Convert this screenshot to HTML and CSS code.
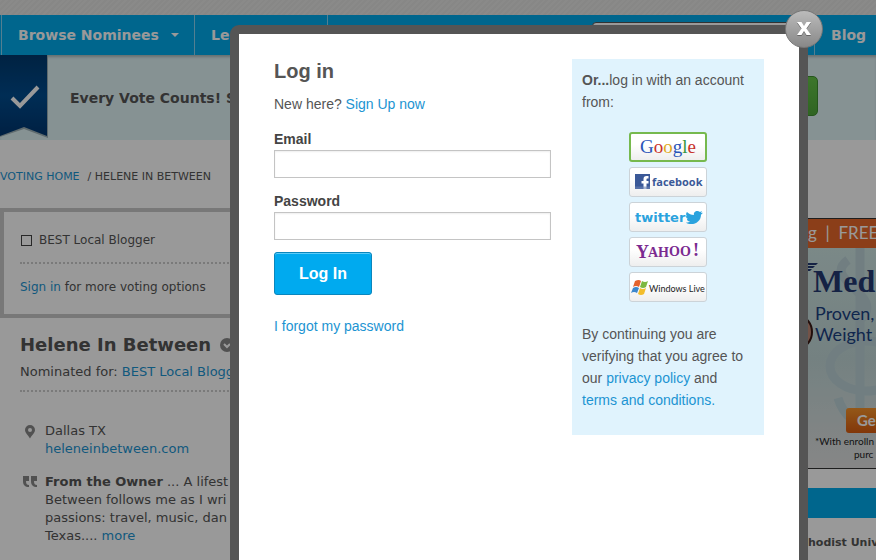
FILE: index.html
```html
<!DOCTYPE html>
<html lang="en">
<head>
  <meta charset="UTF-8">
  <meta name="viewport" content="width=device-width, initial-scale=1.0">
  <title>Helene In Between</title>
  <link rel="stylesheet" href="styles.css">
</head>
<body>

<div class="page">
  <div class="top-strip"></div>
  <nav class="nav">
    <a class="nav-item nav-browse" href="#">Browse Nominees <span class="caret"></span></a>
    <a class="nav-item nav-learn" href="#">Le</a>
    <input class="nav-search" type="search" aria-label="Search">
    <a class="nav-item nav-blog" href="#">Blog</a>
  </nav>

  <div class="banner">
    <svg class="ribbon" width="48" height="84" viewBox="0 0 48 84">
      <defs>
        <linearGradient id="ribbonFill" x1="0" y1="0" x2="0" y2="1">
          <stop offset="0" stop-color="#00396e"/>
          <stop offset="0.5" stop-color="#004c8e"/>
          <stop offset="1" stop-color="#003670"/>
        </linearGradient>
      </defs>
      <path d="M0 82L24 74L48 83V0H0z" fill="#9fb3b8"/>
      <path d="M0 81L24 72L47 81V0H0z" fill="url(#ribbonFill)"/>
      <path d="M12 43L20 51L38 32" fill="none" stroke="#fff" stroke-width="4"/>
    </svg>
    <strong class="banner-text">Every Vote Counts! S</strong>
    <button class="vote-btn" type="button" aria-label="Vote"></button>
  </div>

  <div class="breadcrumb"><a href="#">Voting Home</a><span>/ Helene In Between</span></div>

  <div class="main">
    <div class="content">
      <div class="vote-box">
        <label class="vote-row"><input type="checkbox"> BEST Local Blogger</label>
        <p class="vote-signin"><a href="#">Sign in</a> for more voting options</p>
      </div>

      <div class="profile">
        <h1>Helene In Between
          <svg width="14" height="14" viewBox="0 0 14 14"><circle cx="7" cy="7" r="7" fill="#888"/><path d="M4 6l3 3 3-3" fill="none" stroke="#fff" stroke-width="2"/></svg>
        </h1>
        <p class="nominated">Nominated for: <a href="#">BEST Local Blogger</a></p>
        <div class="detail">
          <svg width="10" height="14" viewBox="0 0 10 14"><path d="M5 0a5 5 0 0 1 5 5c0 3-3 5-5 8.500C3 10 0 8 0 5a5 5 0 0 1 5-5zM5 3a2 2 0 1 0 0 4a2 2 0 0 0 0-4z" fill="#888" fill-rule="evenodd"/></svg>
          <p>Dallas TX<br><a href="#">heleneinbetween.com</a></p>
        </div>
        <div class="detail">
          <svg width="14" height="12" viewBox="0 0 14 12"><path d="M0 0h6v5H3c0 3 1 4 3 4v2c-4 0-6-2-6-6zM8 0h6v5h-3c0 3 1 4 3 4v2c-4 0-6-2-6-6z" fill="#888"/></svg>
          <p><strong>From the Owner</strong> ... A lifest<br>Between follows me as I wri<br>passions: travel, music, dan<br>Texas.... <a href="#">more</a></p>
        </div>
      </div>
    </div>

    <div class="sidebar">
      <div class="ad">
        <div class="ad-top">g&nbsp; |&nbsp; FREE</div>
        <div class="ad-body">
          <svg class="ad-art" width="68" height="219" viewBox="0 0 68 219">
            <g fill="none" stroke="#bcd3d8" stroke-width="9">
              <ellipse cx="58" cy="118" rx="36" ry="25"/>
              <path d="M52 0v180M40 12c-28 20 40 35 12 60M30 150c6 20 20 28 38 30"/>
            </g>
            <path d="M0 15h10l-2 2H0zM0 18h7l-2 2H0zM0 21h4l-2 2H0z" fill="#243a72"/>
            <ellipse cx="-8" cy="84" rx="12" ry="15" fill="#c08b78" stroke="#3a1a14" stroke-width="2"/>
          </svg>
          <div class="ad-logo">Med</div>
          <div class="ad-copy">Proven,<br>Weight</div>
          <button class="ad-btn" type="button">Ge</button>
          <div class="ad-note">*With enrolln<span>purc</span></div>
        </div>
      </div>
      <div class="side-bar-title"></div>
      <strong class="side-text">hodist Univ</strong>
    </div>
  </div>
</div>

<div class="overlay"></div>

<div class="modal" role="dialog" aria-labelledby="loginTitle">
  <button class="close" type="button" aria-label="Close">
    <svg width="16" height="16" viewBox="0 0 16 16"><path d="M1 2h4.500L8 6l2.500-4H15l-4.600 6.500L15 15h-4.500L8 11l-2.500 4H1l4.600-6.500z" fill="#666"/><path d="M1 1h4.500L8 5l2.500-4H15l-4.600 6.500L15 14h-4.500L8 10l-2.500 4H1l4.600-6.500z" fill="#fff"/></svg>
  </button>
  <form class="login">
    <h2 id="loginTitle">Log in</h2>
    <p class="new-here">New here? <a href="#">Sign Up now</a></p>
    <div class="form-group">
      <label for="email">Email</label>
      <input type="text" id="email" name="email">
    </div>
    <div class="form-group">
      <label for="password">Password</label>
      <input type="password" id="password" name="password">
    </div>
    <button class="login-btn" type="submit">Log In</button>
    <p><a href="#">I forgot my password</a></p>
  </form>

  <div class="social">
    <p><strong>Or...</strong>log in with an account from:</p>
    <div class="social-list">
      <button class="social-btn google" type="button">
        <svg width="74" height="26" viewBox="0 0 74 26"><text class="google-text" x="9" y="19"><tspan fill="#2a55b8">G</tspan><tspan fill="#c8322b">o</tspan><tspan fill="#e0a81c">o</tspan><tspan fill="#2a55b8">g</tspan><tspan fill="#37963f">l</tspan><tspan fill="#c8322b">e</tspan></text></svg>
      </button>
      <button class="social-btn" type="button">
        <svg width="76" height="28" viewBox="0 0 76 28">
          <rect x="5" y="6" width="15" height="15" fill="#3b5998"/>
          <path d="M18.500 8h-2c-2 0-3 1-3 3v2h-2v2.500h2V21h3v-5.500h2V13h-2v-1.500c0-.7.300-1 1-1h1z" fill="#fff"/>
          <path d="M5 18.500h15V21H5z" fill="#6d84b4" opacity=".6"/>
          <text class="facebook-text" x="22" y="18">facebook</text>
        </svg>
      </button>
      <button class="social-btn" type="button">
        <svg width="76" height="28" viewBox="0 0 76 28">
          <text class="twitter-text" x="5" y="19">twitter</text>
          <path d="M57 9c2 2 4 3 7 3c-1-3 3-5.500 6-3l2-1l-1 2l2-.3l-2 2c0 6-5 9.500-10 9.300c-2 0-4-.5-5-1.500c2 0 3-.4 4-1c-2-.3-3-1-3-2.500h1c-1.500-.6-2-1.500-2-3l1 .3c-1-1-1.300-3 0-4.300z" fill="#2ba3de"/>
        </svg>
      </button>
      <button class="social-btn" type="button">
        <svg width="76" height="28" viewBox="0 0 76 28"><text class="yahoo-text" y="20"><tspan class="yahoo-big" x="6">Y</tspan><tspan x="18" y="19">A</tspan><tspan x="28">H</tspan><tspan x="39" y="18">O</tspan><tspan x="50">O</tspan><tspan class="yahoo-big" x="63" y="18">!</tspan></text></svg>
      </button>
      <button class="social-btn" type="button">
        <svg width="76" height="28" viewBox="0 0 76 28">
          <path d="M5 8q4-2 6 0l-2 6q-3-2-6 0z" fill="#e5632d"/>
          <path d="M12 8q3 2 6 0l-2 6q-3 2-6 0z" fill="#7db840"/>
          <path d="M3 15q3-2 6 0l-2 5q-3-2-6 0z" fill="#3d87cc"/>
          <path d="M10 15q3 2 6 0l-2 6q-3 2-6 0z" fill="#f3bd2c"/>
          <text class="windows-text" x="19" y="19">Windows Live</text>
        </svg>
      </button>
    </div>
    <p>By continuing you are verifying that you agree to our <a href="#">privacy policy</a> and <a href="#">terms and conditions.</a></p>
  </div>
</div>

</body>
</html>
```

FILE: styles.css
```css
* {
  box-sizing: border-box;
}
body {
  margin: 0;
  font-family: Verdana, "DejaVu Sans", sans-serif;
  font-size: 13px;
  line-height: 18px;
  color: #555;
  background-color: #fff;
}
html, body {
  height: 100%;
  overflow: hidden;
}
a {
  color: #1c94d2;
  text-decoration: none;
}
p, h1, h2 {
  margin: 0;
}
svg {
  display: block;
}
.page {
  white-space: nowrap;
}

/* Header */
.top-strip {
  height: 15px;
  background: repeating-linear-gradient(135deg, #e6e6e4 0, #e6e6e4 2px, #e2e2e0 2px, #e2e2e0 4px);
}
.nav {
  display: flex;
  height: 40px;
  padding-left: 1px;
  background-color: #00aaec;
}
.nav-item {
  padding: 0 17px;
  border-left: 1px solid #8ad4f2;
  color: #fff;
  font-size: 14px;
  font-weight: bold;
  line-height: 40px;
}
.nav-browse {
  display: flex;
  align-items: center;
  gap: 12px;
  width: 193px;
  padding: 0 16px;
}
.nav-learn {
  width: 134px;
  padding: 0 16px;
  border-right: 1px solid #8ad4f2;
}
.caret {
  border: 4px solid transparent;
  border-top-color: #fff;
  border-bottom: 0;
}
.nav-search {
  width: 198px;
  height: 26px;
  margin: 7px 24px 0 auto;
  border: 1px solid #555;
  border-radius: 4px;
}
.nav-blog {
  width: 62px;
  padding: 0 16px;
}
.banner {
  display: flex;
  height: 85px;
  background-color: #e0f3f6;
  box-shadow: inset 0 3px 3px -1px #a9b9bc;
}
.banner-text {
  margin-left: 22px;
  font-size: 14px;
  line-height: 86px;
}
.vote-btn {
  width: 120px;
  height: 40px;
  margin: 21px 58px 0 auto;
  border: 1px solid #3f8f2f;
  border-radius: 5px;
  background: linear-gradient(#66c548, #50a83a);
}
.breadcrumb {
  display: flex;
  gap: 8px;
  height: 68px;
  padding-top: 28px;
  font-size: 11px;
  text-transform: uppercase;
}

/* Nominee */
.main {
  display: flex;
}
.content {
  flex: 1;
  min-width: 0;
}
.vote-box {
  height: 110px;
  padding: 15px 16px;
  border: 4px solid #c8c8c8;
  font-size: 12px;
}
.vote-row {
  display: flex;
  align-items: center;
  gap: 7px;
  height: 37px;
  padding: 0 1px 9px;
  border-bottom: 2px dotted #ccc;
}
.vote-row input {
  appearance: none;
  width: 11px;
  height: 11px;
  margin: 0;
  border: 1px solid #444;
}
.vote-signin {
  padding-top: 14px;
}
.profile {
  padding: 15px 20px;
}
.profile h1 {
  display: flex;
  align-items: center;
  gap: 9px;
  font-size: 18px;
  line-height: 24px;
}
.nominated {
  padding: 6px 0 9px;
  margin-bottom: 30px;
  border-bottom: 2px dotted #ccc;
}
.detail {
  display: flex;
  margin-bottom: 15px;
}
.detail svg {
  flex: none;
  width: 20px;
  margin: 3px 5px 0 0;
}

/* Sidebar */
.sidebar {
  width: 68px;
  padding-top: 10px;
  overflow: hidden;
}
.ad {
  width: 300px;
  height: 251px;
  margin-bottom: 19px;
  border: 1px solid #333;
  border-left: 0;
  font-family: Lato, sans-serif;
}
.ad-top {
  height: 29px;
  background-color: #e8682a;
  color: #fff;
  font-size: 17px;
  line-height: 28px;
}
.ad-body {
  position: relative;
  width: 68px;
  height: 220px;
  background: linear-gradient(#cde4e2, #c2d8d8 50%, #e0e0e0);
}
.ad-art {
  position: absolute;
  top: 0;
  left: 0;
}
.ad-logo, .ad-copy, .ad-btn, .ad-note {
  position: relative;
}
.ad-logo {
  padding: 14px 0 0 5px;
  color: #243a72;
  font: bold 32px/38px "Liberation Serif", serif;
}
.ad-copy {
  padding: 3px 0 0 7px;
  color: #1a4080;
  font-size: 18px;
  line-height: 21px;
}
.ad-btn {
  display: block;
  width: 60px;
  height: 25px;
  margin: 63px 0 0 38px;
  padding: 0 11px;
  border: 0;
  border-radius: 3px;
  background: linear-gradient(#f7932a, #d85c10);
  color: #fff;
  font: bold 15px/25px Lato, sans-serif;
  text-align: left;
}
.ad-note {
  padding: 2px 0 0 7px;
  color: #222;
  font-size: 10px;
  line-height: 13px;
}
.ad-note span {
  display: block;
  margin-left: 39px;
}
.side-bar-title {
  height: 30px;
  margin-bottom: 15px;
  background-color: #00aaec;
}
.side-text {
  font-size: 11px;
}

/* Login dialog */
.overlay {
  position: fixed;
  inset: 0;
  background-color: rgba(0, 0, 0, 0.4);
}
.modal {
  position: absolute;
  top: 25px;
  right: 68px;
  bottom: -20px;
  left: 230px;
  display: flex;
  align-items: flex-start;
  gap: 21px;
  padding: 25px 35px;
  border: 9px solid #555;
  border-radius: 9px;
  background-color: #fff;
  font-family: Arial, "Liberation Sans", sans-serif;
  font-size: 14px;
  line-height: 22px;
}
.close {
  position: absolute;
  top: -24px;
  right: -24px;
  display: flex;
  align-items: center;
  justify-content: center;
  width: 38px;
  height: 38px;
  padding: 0;
  border: 1px solid #777;
  border-radius: 50%;
  background: linear-gradient(#bbb, #888);
}
.login {
  flex: 1;
}
.login h2 {
  font-size: 20px;
  line-height: 24px;
}
.new-here {
  margin: 10px 0 13px;
}
.form-group {
  margin-bottom: 12px;
}
.form-group label {
  display: block;
  font-weight: bold;
  color: #444;
}
.form-group input {
  display: block;
  width: 100%;
  height: 28px;
  border: 1px solid #c4c4c4;
  box-shadow: inset 0 1px 2px #eee;
}
.login-btn {
  display: block;
  width: 98px;
  height: 43px;
  margin-bottom: 20px;
  border: 1px solid #0a86bd;
  border-radius: 3px;
  background-color: #00aaef;
  box-shadow: inset 0 1px 0 #5cccf8;
  color: #fff;
  font: bold 16px Arial, "Liberation Sans", sans-serif;
}
.social {
  width: 192px;
  padding: 10px 10px 24px;
  background-color: #e0f3fd;
}
.social-list {
  display: flex;
  flex-direction: column;
  align-items: center;
  gap: 5px;
  padding: 19px 0 21px;
}
.social-btn {
  width: 78px;
  height: 30px;
  padding: 0;
  border: 1px solid #ccd3d8;
  border-radius: 3px;
  background: linear-gradient(#fff 40%, #eee);
}
.google {
  border: 2px solid #76b94e;
}
.google-text {
  font: 19px "Liberation Serif", serif;
}
.facebook-text {
  font: bold 11px "Open Sans", sans-serif;
  fill: #3b5998;
}
.twitter-text {
  font: bold 13px "DejaVu Sans", sans-serif;
  fill: #2ba3de;
}
.yahoo-text {
  font: bold 14px "Liberation Serif", serif;
  fill: #7b2a90;
}
.yahoo-big {
  font-size: 18px;
}
.windows-text {
  font: 9px Lato, sans-serif;
  fill: #222;
}
```
